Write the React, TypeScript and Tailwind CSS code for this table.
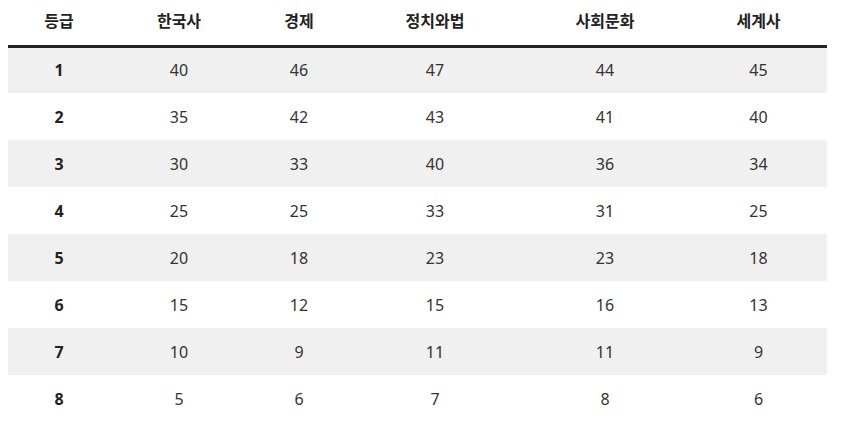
const headers = ["등급", "한국사", "경제", "정치와법", "사회문화", "세계사"];

const rows = [
  [1, 40, 46, 47, 44, 45],
  [2, 35, 42, 43, 41, 40],
  [3, 30, 33, 40, 36, 34],
  [4, 25, 25, 33, 31, 25],
  [5, 20, 18, 23, 23, 18],
  [6, 15, 12, 15, 16, 13],
  [7, 10, 9, 11, 11, 9],
  [8, 5, 6, 7, 8, 6],
];

const widths = ["w-[102px]", "w-[138px]", "w-[102px]", "w-[170px]", "w-[170px]", "w-[137px]"];

export default function App() {
  return (
    <div className="bg-white px-2 text-[16px] text-[#333] [font-family:'Noto_Sans','Noto_Sans_CJK_KR',sans-serif]">
      <table className="w-[819px] border-collapse table-fixed">
        <thead>
          <tr className="h-[46px]">
            {headers.map((h, i) => (
              <th
                key={h}
                className={`${widths[i]} border-b-[3px] border-[#222] pb-[3px] text-center font-bold text-[#222]`}
              >
                {h}
              </th>
            ))}
          </tr>
        </thead>
        <tbody>
          {rows.map((row, r) => (
            <tr key={r} className={`h-[47px] ${r % 2 === 0 ? "bg-[#f0f0f0]" : "bg-white"}`}>
              {row.map((v, c) => (
                <td
                  key={c}
                  className={`text-center ${c === 0 ? "font-bold text-[#222]" : ""}`}
                >
                  {v}
                </td>
              ))}
            </tr>
          ))}
        </tbody>
      </table>
    </div>
  );
}
